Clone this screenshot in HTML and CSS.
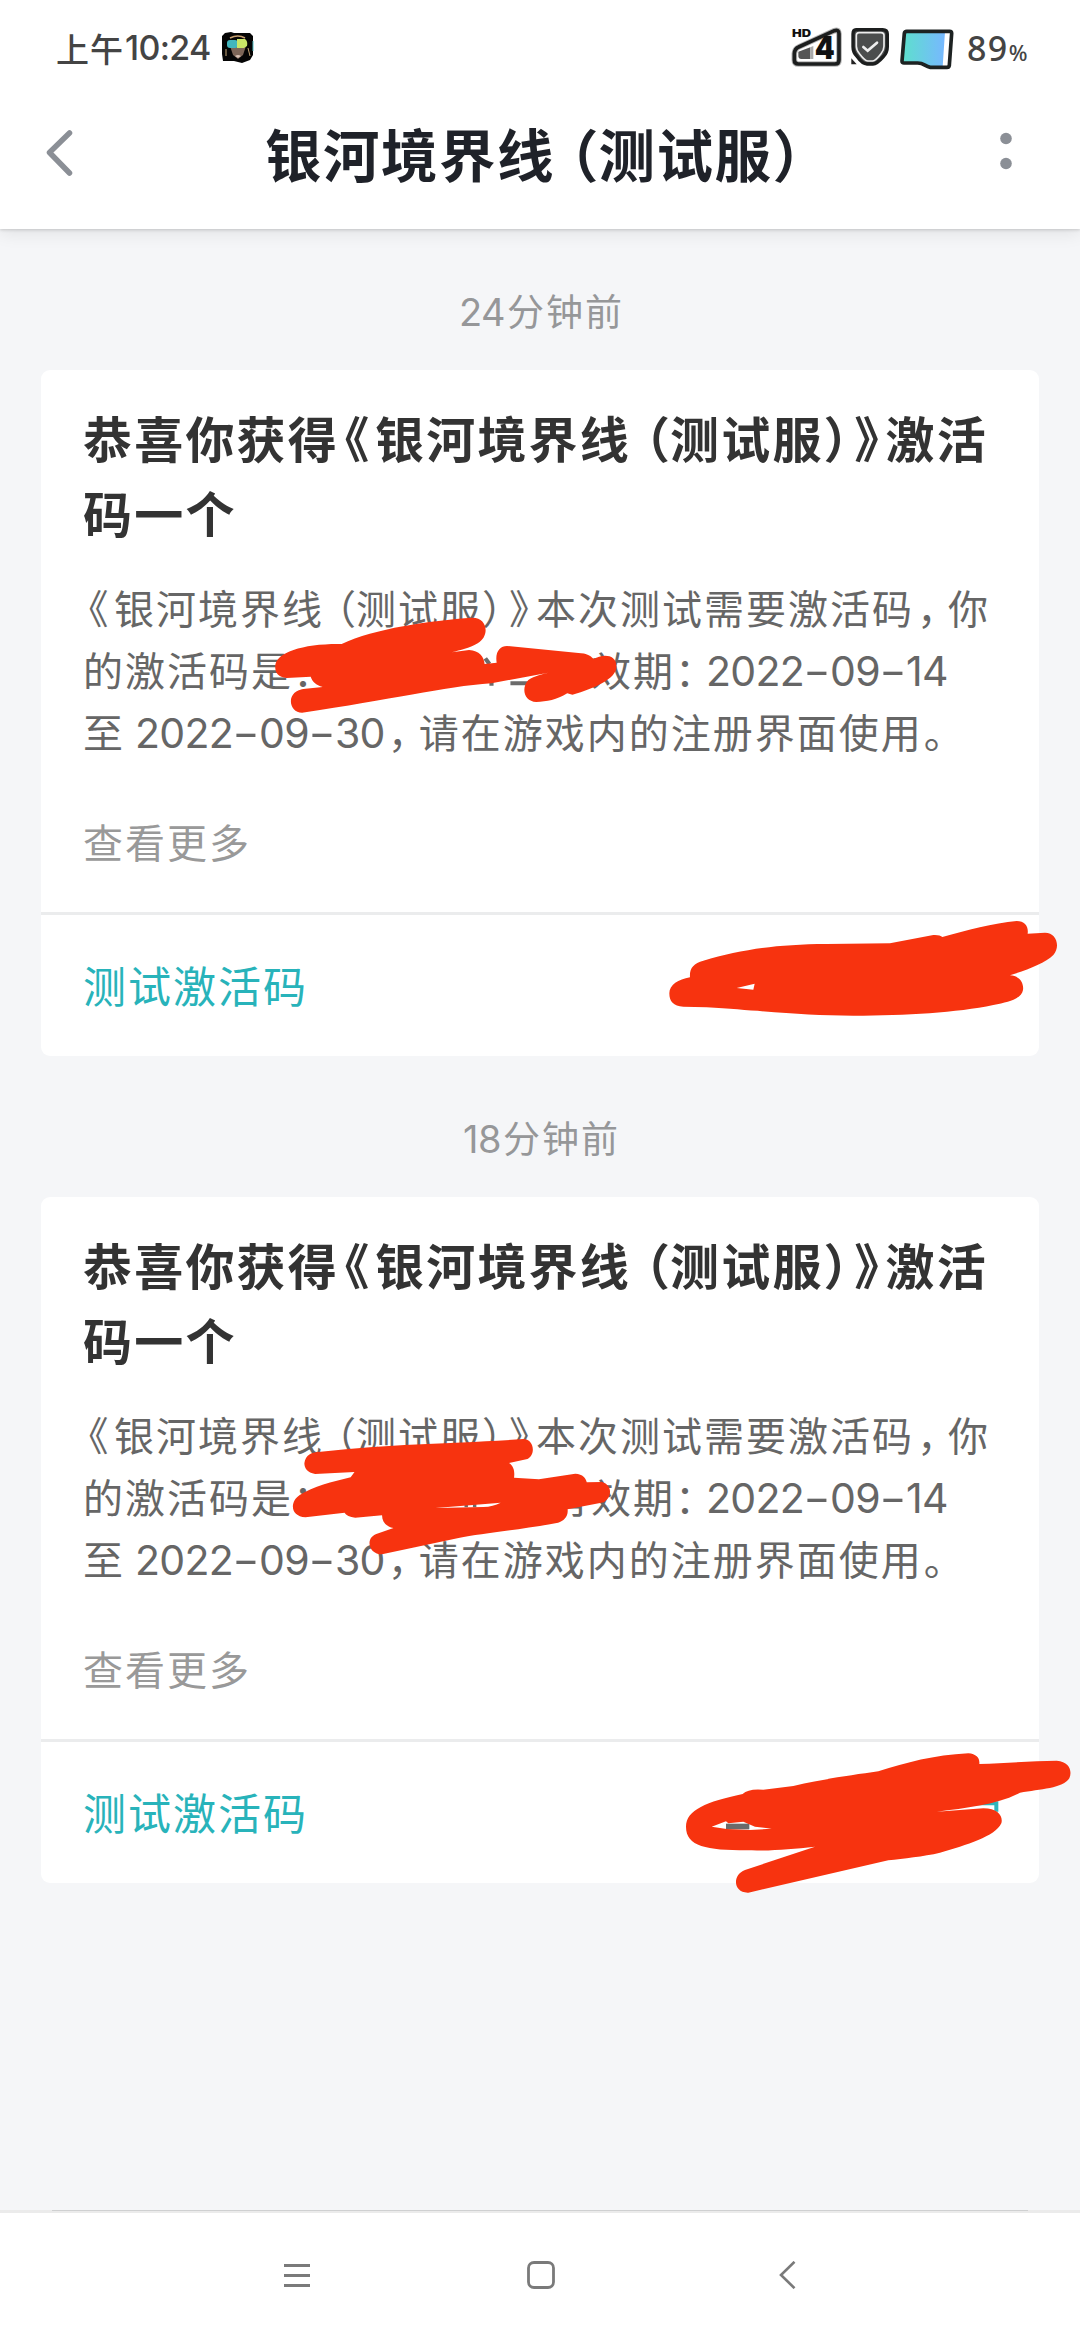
FILE: index.html
```html
<!DOCTYPE html>
<html lang="zh-CN">
<head>
<meta charset="utf-8">
<title>银河境界线（测试服）</title>
<link rel="stylesheet" href="styles.css">
</head>
<body>
<div class="screen">
  <header class="top">
    <div class="status">
      <div class="clock"><span class="ampm">上午</span><span class="num">10:24</span></div>
      <svg class="avatar" width="32" height="31" viewBox="0 0 32 31">
        <path d="M3 1L9 0L12 1H28L31 4V23L28 28L20 31L12 29H1L0 22V4Z" fill="#050505"/>
        <path d="M8 14H24L21 23L16 27L11 23Z" fill="#7d6658"/>
        <path d="M8 6Q16 2 23 6" fill="none" stroke="#c9a070" stroke-width="1.5"/>
        <rect x="5" y="8" width="11" height="8" rx="3" fill="#42b6bd"/>
        <path d="M15 7H23Q26 9 25 14L22 16H15Z" fill="#c9e767"/>
        <path d="M13 24Q16 22 19 24L16 26Z" fill="#d9c3b6"/>
        <path d="M4 17V24M26 16L28 24" stroke="#c8a878" stroke-width="1"/>
        <path d="M31 9V19" stroke="#54bec5" stroke-width="1"/>
      </svg>
      <svg class="indicators" width="180" height="65" viewBox="0 0 540 195">
        <defs>
          <linearGradient id="charge"><stop offset="0" stop-color="#5de0cc"/><stop offset="1" stop-color="#77b8ff"/></linearGradient>
        </defs>
        <path d="M53 96L160 47Q174 43 174 56V134Q174 147 162 147H52Q40 147 40 135V116Q41 101 53 96Z" fill="#fff" stroke="#b5b5b5" stroke-width="17"/>
        <path d="M53 96L160 47Q174 43 174 56V134Q174 147 162 147H52Q40 147 40 135V116Q41 101 53 96Z" fill="none" stroke="#1c1e1e" stroke-width="11"/>
        <path d="M52 110L88 97V132H61Q51 132 52 121Z" fill="#555"/>
        <path d="M88 97L97 93V132H88Z" fill="#aaa"/>
        <text class="net" x="101" y="133" textLength="60" lengthAdjust="spacingAndGlyphs">4</text>
        <text class="hd" x="33" y="66" textLength="57" lengthAdjust="spacingAndGlyphs">HD</text>
        <path d="M225 44H305Q319 44 319 57V95Q319 112 307 125Q288 147 276 147H258Q244 147 228 124Q216 112 216 95V57Q216 44 225 44Z" fill="#4b4d4d" stroke="#1c1e1e" stroke-width="10"/>
        <path d="M234 53H300Q309 53 309 61V94Q309 105 300 116Q284 137 275 138H260Q251 137 236 117Q226 106 226 94V61Q226 53 234 53Z" fill="none" stroke="#ededed" stroke-width="5"/>
        <path d="M247 96L260 107L288 83" fill="none" stroke="#eee" stroke-width="8" stroke-linecap="round"/>
        <path d="M211 130L227 148H211Z" fill="#222"/>
        <path d="M377 49H506Q512 49 512 55L505 151Q504 157 498 157H448C430 154 430 143 408 144H369Q363 144 363 138L370 55Q371 49 377 49Z" fill="#fff"/>
        <path d="M370 50H492L485 155H448C430 154 430 143 408 144H363Z" fill="url(#charge)"/>
        <path d="M377 49H506Q512 49 512 55L505 151Q504 157 498 157H448C430 154 430 143 408 144H369Q363 144 363 138L370 55Q371 49 377 49Z" fill="none" stroke="#1d2222" stroke-width="11"/>
      </svg>
      <div class="battery">89<small>%</small></div>
    </div>
    <div class="bar">
      <svg class="back" width="27" height="46" viewBox="0 0 27 46"><path d="M23.500 3L3.500 22.500L23.500 43" fill="none" stroke="#8b8f96" stroke-width="5.500" stroke-linecap="round" stroke-linejoin="round"/></svg>
      <h1 class="name">银河境界线<span class="pu po">（</span>测试服<span class="pu pc">）</span></h1>
      <svg class="more" width="12" height="38" viewBox="0 0 12 38"><circle cx="6" cy="6.500" r="5.800" fill="#8b8f96"/><circle cx="6" cy="31.500" r="5.800" fill="#8b8f96"/></svg>
    </div>
  </header>

  <main class="feed">
    <div class="time"><span class="num">24</span>分钟前</div>
    <article class="card">
      <h2 class="title">恭喜你获得<span class="pu bo">《</span>银河境界线<span class="pu po">（</span>测试服<span class="pu pc">）</span><span class="pu bc">》</span>激活<br>码一个</h2>
      <p class="body"><span class="pu bo">《</span>银河境界线<span class="pu po">（</span>测试服<span class="pu pc">）</span><span class="pu bc">》</span>本次测试需要激活码<span class="pu cm">，</span>你<br>的激活码是<span class="code"><span class="pu cl">：</span></span>有效期<span class="pu cl">：</span><span class="num">2022<i>-</i>09<i>-</i>14</span><br>至<span class="num lead">2022<i>-</i>09<i>-</i>30</span><span class="pu cm">，</span>请在游戏内的注册界面使用<span class="pu stop">。</span></p>
      <div class="moreinfo">查看更多</div>
      <div class="foot">测试激活码</div>
    </article>
    <div class="time"><span class="num">18</span>分钟前</div>
    <article class="card">
      <h2 class="title">恭喜你获得<span class="pu bo">《</span>银河境界线<span class="pu po">（</span>测试服<span class="pu pc">）</span><span class="pu bc">》</span>激活<br>码一个</h2>
      <p class="body"><span class="pu bo">《</span>银河境界线<span class="pu po">（</span>测试服<span class="pu pc">）</span><span class="pu bc">》</span>本次测试需要激活码<span class="pu cm">，</span>你<br>的激活码是<span class="code"><span class="pu cl">：</span></span>有效期<span class="pu cl">：</span><span class="num">2022<i>-</i>09<i>-</i>14</span><br>至<span class="num lead">2022<i>-</i>09<i>-</i>30</span><span class="pu cm">，</span>请在游戏内的注册界面使用<span class="pu stop">。</span></p>
      <div class="moreinfo">查看更多</div>
      <div class="foot">测试激活码</div>
    </article>
  </main>

  <nav class="nav">
    <svg width="28" height="28" viewBox="0 0 28 28"><path d="M1 4.500H27M1 14.500H27M1 24.500H27" stroke="#7a7a7a" stroke-width="2.800"/></svg>
    <svg width="28" height="28" viewBox="0 0 28 28"><rect x="1.500" y="1.500" width="25" height="25" rx="5.500" fill="none" stroke="#7a7a7a" stroke-width="2.800"/></svg>
    <svg width="28" height="28" viewBox="0 0 28 28"><path d="M23.500 .8L10 14L23.500 27.200" fill="none" stroke="#7a7a7a" stroke-width="2.600"/></svg>
  </nav>

  <svg class="marker" width="1080" height="2340" viewBox="0 0 1080 2340" fill="#f7330f" fill-rule="evenodd">
    <g transform="translate(30 350) scale(.34439 .33333)">
      <path d="M1340 1007V985M1395 1000H1455M1322 925L1334 942" stroke="#6b6b6b" stroke-width="12"/>
      <path d="M712 950C712 905 800 880 905 882C1000 835 1160 812 1285 803C1330 803 1335 860 1300 880C1275 895 1250 900 1225 907L1275 900C1305 902 1318 920 1320 942L1355 938C1350 905 1365 888 1385 888L1600 910C1625 912 1630 922 1637 927C1660 912 1703 910 1703 950C1703 985 1640 1015 1575 1034L1560 1030C1530 1050 1500 1055 1470 1056C1435 1055 1425 1015 1447 990C1465 977 1490 972 1505 968L1340 1000C1200 1010 1050 1050 790 1088C750 1088 740 1020 800 1016L850 1011C830 1005 820 995 815 980L745 984C722 980 712 970 712 950Z"/>
    </g>
    <path transform="translate(640 890) scale(.33333)" d="M88 310C88 285 115 268 150 262C148 235 160 220 190 212C300 180 400 163 560 162L750 160L880 135Q900 134 907 141C980 120 1060 100 1130 93C1155 93 1166 110 1163 131L1215 128C1250 128 1262 170 1240 195C1215 220 1160 240 1110 256C1140 258 1152 280 1149 300C1145 325 1110 335 1060 345C950 368 800 377 640 377C500 377 400 365 200 352L130 350C100 348 88 335 88 310ZM290 294L344 281L340 299Z"/>
    <g transform="translate(30 1400) scale(.38265 .33333)">
      <path d="M1140 312V322M1162 310V322" stroke="#6b6b6b" stroke-width="9"/>
      <path d="M717 190C720 165 735 155 760 155C950 130 1100 132 1290 117C1318 118 1322 165 1300 177L1252 189C1265 200 1267 215 1265 233L1330 238L1425 221C1445 222 1453 235 1455 247L1495 246C1522 255 1522 290 1500 307L1405 328C1407 350 1395 362 1380 368C1280 390 1180 400 1120 414L920 463C885 463 875 415 905 402L950 384C930 380 920 365 920 346L850 353Q828 350 822 338L720 352C680 350 678 305 705 285C740 260 790 245 838 232L848 216L745 222C725 218 717 205 717 190ZM1060 324L1230 308Q1210 320 1185 321Z"/>
    </g>
    <g transform="translate(640 1720) scale(.33333)">
      <path d="M258 311H328V328H258Z" fill="#6b6b6b"/>
      <path d="M1000 250H1069V275" fill="none" stroke="#2fb5bb" stroke-width="12"/>
      <path d="M138 320C138 270 200 245 308 222Q325 205 370 209L460 198C560 175 640 165 715 154C800 128 880 105 985 100C1010 102 1020 115 1018 132C1100 130 1180 122 1250 122C1290 125 1297 155 1288 175C1270 205 1200 208 1140 218C1070 255 980 263 890 275L1030 265C1075 265 1090 290 1084 310C1065 350 980 375 900 398C850 410 790 415 745 421L325 518C280 520 275 465 315 450L525 380C450 388 390 393 320 391C200 390 138 380 138 320ZM215 320L258 304L265 310L310 305L345 320L395 326L330 330L260 327Z"/>
    </g>
  </svg>
</div>
</body>
</html>
```
FILE: styles.css
```css
* { box-sizing: border-box; margin: 0; padding: 0; }
body { background: #f5f6f8; font-family: "Noto Sans CJK SC", "Noto Sans", sans-serif; }
svg { display: block; flex: none; }

.screen {
  position: relative;
  width: 1080px;
  height: 2340px;
  overflow: hidden;
  display: flex;
  flex-direction: column;
  white-space: nowrap;
}

.num { font-family: Inter, "Noto Sans", sans-serif; line-height: 1; }

.pu {
  display: inline-block;
  font-feature-settings: "halt";
  letter-spacing: 0;
  line-height: 1;
  width: .5em;
  text-align: center;
}

/* Header */
.top {
  height: 229px;
  background: #fff;
  box-shadow: 0 1px 3px rgba(0, 0, 0, .16), 0 5px 16px rgba(0, 0, 0, .08);
}
.status {
  height: 95px;
  display: flex;
  align-items: center;
  padding-left: 56px;
  color: #444;
}
.clock { width: 166px; display: flex; align-items: center; }
.ampm { font-size: 33px; font-weight: 500; letter-spacing: 1px; line-height: 40px; }
.clock .num { font-size: 34px; font-weight: 500; letter-spacing: -.7px; line-height: 40px; padding-left: 1px; }
.indicators { margin-left: 527px; }
.battery {
  font-family: "Noto Sans", sans-serif;
  font-size: 34px;
  font-weight: 500;
  letter-spacing: 1.4px;
  padding-left: 6px;
}
.battery small { font-size: 22px; }
.hd { font: 900 31px Inter, sans-serif; fill: #111; }
.net { font: 900 92px Inter, sans-serif; fill: #111; }

.bar {
  height: 116px;
  display: flex;
  align-items: center;
  padding-left: 46px;
}
.name {
  width: 735px;
  margin: -3px 0 0 192px;
  font-size: 56.5px;
  font-weight: 700;
  line-height: 80px;
  letter-spacing: 1.5px;
  color: #1f2229;
}
.name .po { width: .77em; text-align: right; }
.more { margin-top: -4px; }

/* Messages */
.feed { flex: 1; padding: 0 41px; }
.time {
  height: 141px;
  padding: 51px 0 0 3px;
  text-align: center;
  font-size: 37px;
  line-height: 60px;
  letter-spacing: 2px;
  color: #969799;
}
.time .num { font-size: 38px; letter-spacing: -.5px; padding-right: 2px; }
.card {
  height: 686px;
  background: #fff;
  border-radius: 9px;
  padding-top: 29px;
}
.title {
  height: 150px;
  padding-left: 42px;
  font-size: 49px;
  font-weight: 700;
  line-height: 75px;
  letter-spacing: 2.2px;
  color: #333;
}
.title .bo { width: .735em; }
.title .po { width: .795em; text-align: right; }
.title .pc { width: .49em; }
.title .bc { width: .775em; }

.body {
  height: 186px;
  padding-left: 42px;
  margin-top: 27px;
  font-size: 40px;
  line-height: 62px;
  letter-spacing: 2px;
  color: #666;
}
.body .bo { width: 31px; }
.body .po { width: 32px; text-align: right; }
.body .bc { width: 34px; }
.body .cm { width: 34px; padding-left: 3px; text-align: left; }
.body .cl { width: 31px; text-align: left; }
.body .stop { padding-left: 1px; }
.body .code { display: inline-block; line-height: 1; width: 256px; }
.body .num { font-size: 41px; letter-spacing: -.7px; }
.body .lead { padding-left: 10px; }
.body i { display: inline-block; font-style: normal; width: 26px; text-align: center; transform: scaleX(1.45); letter-spacing: 0; }

.moreinfo {
  height: 150px;
  padding: 48px 0 0 42px;
  font-size: 40px;
  line-height: 62px;
  letter-spacing: 2px;
  color: #999;
}
.foot {
  border-top: 3px solid #ebeced;
  padding: 38px 0 0 42px;
  font-size: 43px;
  line-height: 62px;
  letter-spacing: 2px;
  color: #28b3ba;
}

/* System navigation */
.nav {
  height: 130px;
  background: linear-gradient(#cfd0d1, #cfd0d1) 52px 0 / 976px 1px no-repeat, linear-gradient(#ebebeb, #ebebeb) 0 0 / 100% 3px no-repeat, #fff;
  padding: 51px 0 0 283px;
  display: flex;
  gap: 216px;
}

.marker { position: absolute; left: 0; top: 0; }
```
